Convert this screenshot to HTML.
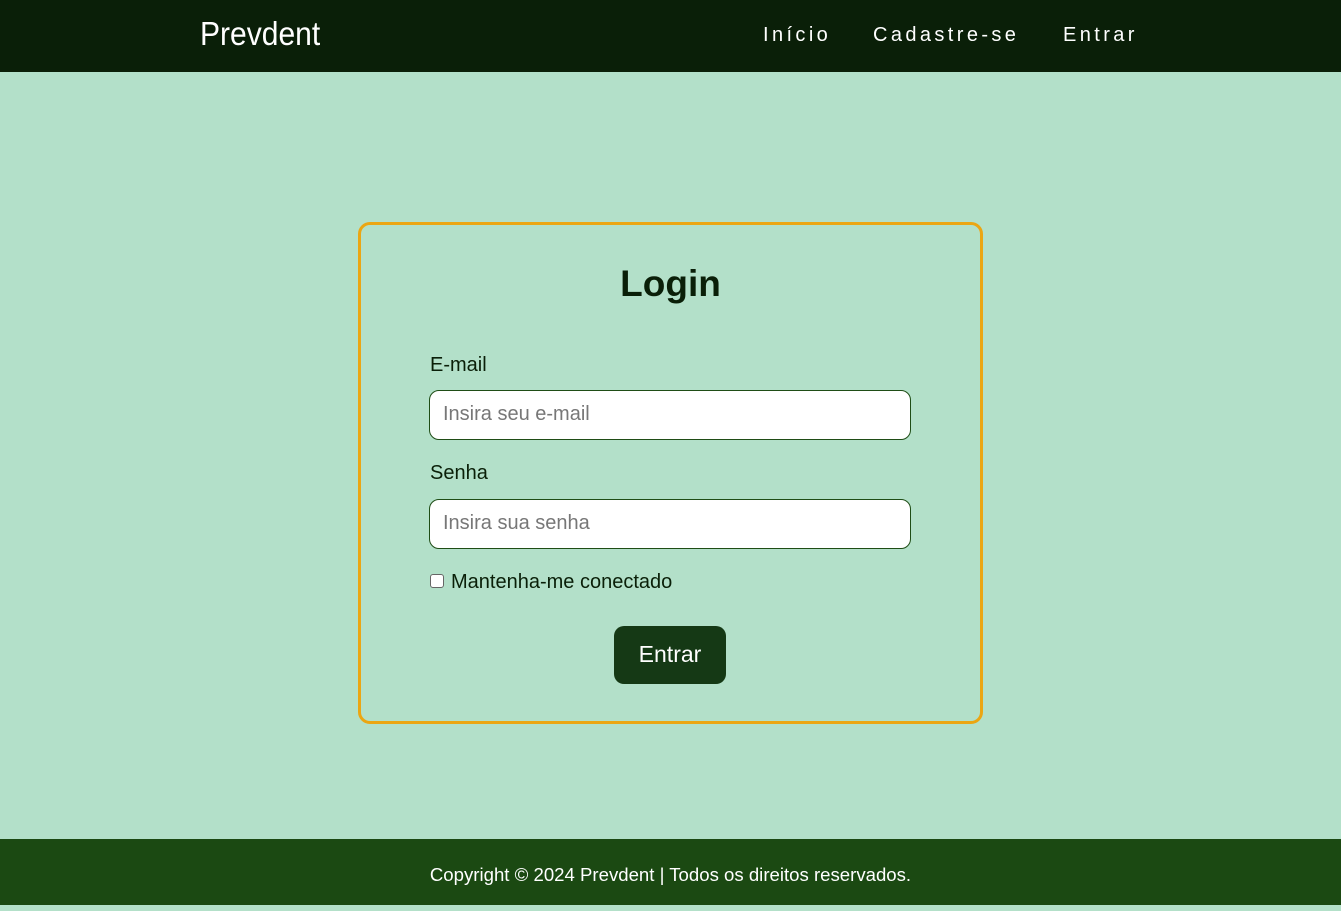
<!DOCTYPE html>
<html><head><meta charset="utf-8"><style>
*{margin:0;padding:0;box-sizing:border-box}
body{width:1341px;height:905px;background:#b3e0c9;font-family:"Liberation Sans",sans-serif;position:relative;overflow:hidden}
.hdr{position:absolute;left:0;top:0;width:1341px;height:72px;background:#0a1f08}
.logo{position:absolute;left:200px;top:15px;color:#fff;font-family:"Liberation Sans Narrow","Liberation Sans",sans-serif;font-size:33px;transform:scaleX(0.91);transform-origin:left}
.nav{position:absolute;top:24px;color:#fff;font-size:20px;letter-spacing:3.4px}
.card{position:absolute;left:358px;top:222px;width:625px;height:502px;border:3px solid #eba613;border-radius:12px}
h1{position:absolute;left:0;width:100%;top:38px;text-align:center;font-size:37px;color:#0a1f08}
.lbl{position:absolute;left:69px;font-size:20px;color:#0a1f08}
.inp{position:absolute;left:68px;width:482px;height:50px;background:#fff;border:1px solid #1f4d16;border-radius:10px;font-size:20px;color:#777;padding:12px 13px}
.cb{position:absolute;left:69px;top:349px;width:14px;height:14px;border:1px solid #666;border-radius:3px;background:#fff}
.btn{position:absolute;left:253px;top:401px;width:112px;height:58px;background:#153915;border-radius:10px;color:#fff;font-size:23px;text-align:center;line-height:56px}
.ftr{position:absolute;left:0;top:839px;width:1341px;height:66px;background:#1b4912;color:#fff;font-size:18.6px;text-align:center;line-height:72px}
</style></head><body>
<div class="hdr">
<div class="logo">Prevdent</div>
<div class="nav" style="left:763px">Início</div>
<div class="nav" style="left:873px">Cadastre-se</div>
<div class="nav" style="left:1063px">Entrar</div>
</div>
<div class="card">
<h1>Login</h1>
<div class="lbl" style="top:129px">E-mail</div>
<div class="inp" style="top:165px">Insira seu e-mail</div>
<div class="lbl" style="top:237px">Senha</div>
<div class="inp" style="top:274px">Insira sua senha</div>
<div class="cb"></div>
<div class="lbl" style="left:90px;top:346px">Mantenha-me conectado</div>
<div class="btn">Entrar</div>
</div>
<div class="ftr">Copyright © 2024 Prevdent | Todos os direitos reservados.</div>
</body></html>
